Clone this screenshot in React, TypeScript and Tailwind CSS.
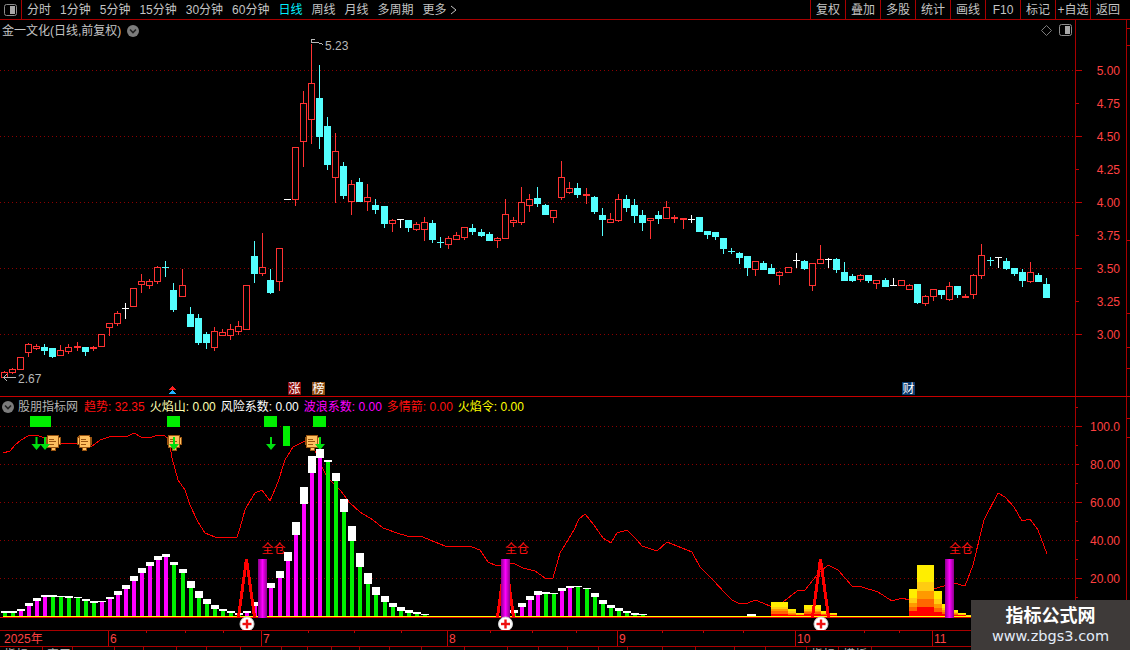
import React from 'react'

type Row = [string, number, number, number, number]

const RED = '#ff3232'
const CYAN = '#54ffff'
const LINE = 'border-[#a80000]'
const DOT = '#8c0000'

// candles, values are read off a 3x crop so each group has its own base y
const group1: Row[] = [
  ['r',420,427,443,445],['r',412,418,428,430],['r',382,382,419,419],['r',338,343,368,380],['r',340,348,354,358],
  ['c',339,351,360,374],['c',354,354,378,381],['r',342,361,377,377],['r',339,352,365,371],['r',333,348,353,360],
  ['c',351,351,363,377],['r',345,351,355,362],['r',310,313,350,350],['r',276,280,293,315],['r',240,250,281,285],
  ['w',216,236,236,264],['r',175,175,230,230],['r',129,154,163,186],['r',145,154,166,176],['r',106,112,155,161],
  ['x',90,111,111,138],['c',156,181,237,243],['r',114,166,200,200],['c',228,252,288,288],['c',249,264,336,342],
  ['c',303,312,336,354],['r',288,304,353,362],['r',294,307,317,317],['r',279,298,317,327],['r',270,289,305,312],
  ['r',166,166,299,299],['c',30,78,129,156],['r',6,112,131,137],['c',114,150,186,189],['r',55,55,155,180],
]
const group2: Row[] = [
  ['w',508,508,508,508],['r',352,352,508,525],['r',180,220,334,408],['r',40,160,268,339],['c',102,204,318,354],
  ['c',258,288,402,417],['r',306,364,443,516],['c',393,408,495,504],['r',447,463,515,552],['c',441,456,513,513],
  ['r',459,502,515,540],['c',504,525,537,549],['c',528,528,579,591],['r',564,570,581,603],['w',565,567,567,591],
  ['c',567,570,591,603],['r',573,583,597,600],['r',558,577,597,630],['c',567,579,627,636],['x',618,636,636,651],
  ['r',615,624,644,654],['r',603,616,629,629],['r',592,592,621,627],['c',579,594,603,612],['c',594,606,615,618],
  ['c',603,612,630,630],['r',618,624,632,651],['r',504,553,626,626],['r',558,570,578,588],['r',468,517,578,582],
  ['r',489,508,527,543],['c',468,504,519,528],['c',519,525,552,552],['r',541,541,563,576],['r',390,442,503,507],
]
const group3: Row[] = [
  ['r',93,115,128,131],['c',96,114,132,141],['r',111,132,137,159],['c',135,141,183,189],['c',171,195,207,255],
  ['r',186,208,218,218],['r',129,148,212,215],['c',132,147,171,183],['c',144,165,195,216],['c',177,195,216,240],
  ['r',204,205,212,264],['c',180,195,204,219],['r',150,172,206,206],['r',192,202,206,216],['r',204,204,209,234],
  ['w',192,207,207,216],['c',201,201,243,243],['c',240,243,252,264],['c',246,246,258,267],['c',264,264,294,309],
  ['x',291,303,303,309],['c',303,309,321,339],['c',318,318,351,375],['r',334,334,357,375],['c',330,339,357,357],
  ['c',339,354,369,369],['r',360,367,377,402],['r',348,352,368,368],['w',306,330,330,351],['c',327,333,354,357],
  ['r',340,340,405,420],['r',282,328,341,341],['w',321,327,327,351],
]
const group4: Row[] = [
  ['c',81,87,117,126],['c',93,126,150,150],['c',129,138,150,153],['r',129,136,147,153],['c',135,135,150,156],
  ['r',147,151,159,174],['c',141,150,168,168],['w',141,165,165,165],['r',147,151,167,167],['r',159,166,179,179],
  ['c',162,162,216,219],['r',192,199,219,225],['r',178,178,200,210],['c',177,180,192,204],['r',153,169,207,210],
  ['c',165,168,192,201],['r',189,199,203,203],['r',129,136,194,204],['r',39,76,137,144],['x',78,90,90,105],
  ['w',78,81,81,111],['c',81,93,114,117],['c',114,114,129,135],['c',114,126,150,168],['r',93,127,153,156],
  ['c',126,135,153,153],['c',141,162,201,201],
]

const rebase = (rows: Row[], base: number): Row[] =>
  rows.map(([t, a, b, c, d]) => [t, base + a / 3, base + b / 3, base + c / 3, base + d / 3])
const candles = [...rebase(group1, 230), ...rebase(group2, 30), ...rebase(group3, 150), ...rebase(group4, 230)]

const cx = (i: number) => Math.floor(4.3 + 8.08 * i) + 0.5
const snap = (v: number) => Math.floor(v) + 0.5

// index, colour, top of white cap, bottom of white cap
type Bar = [number, string, number, number]
const barsA: Bar[] = [
  [0,'g',243,248],[1,'g',243,248],[2,'m',237,243],[3,'m',219,228],[4,'m',204,213],[5,'m',195,201],[6,'g',195,201],
  [7,'g',198,201],[8,'g',198,204],[9,'g',201,204],[10,'g',207,213],[11,'g',213,219],[12,'m',213,216],[13,'m',201,207],
  [14,'m',183,195],[15,'m',165,177],[16,'m',138,153],[17,'m',114,129],[18,'m',96,108],[19,'m',78,90],[20,'m',72,81],
  [21,'g',96,105],[22,'g',117,129],[23,'g',153,174],[24,'g',183,204],[25,'g',207,222],[26,'g',225,237],[27,'g',237,243],
  [28,'g',243,249],[29,'g',249,255],[30,'m',243,249],[31,'m',216,228],
  [63,'g',240,248],[64,'m',219,231],[65,'m',198,210],[66,'m',183,195],[67,'g',186,191],[68,'g',189,192],[69,'m',174,183],
  [70,'m',168,174],[71,'g',168,171],[72,'g',174,177],[73,'g',189,201],[74,'g',210,222],[75,'g',225,234],[76,'g',234,243],
  [77,'g',243,249],[78,'g',249,255],[79,'g',252,255],
]
const barsB: Bar[] = [
  [33,'m',429,444],[34,'m',393,414],[35,'m',336,363],[36,'m',246,285],[37,'m',141,192],[38,'m',48,99],[39,'m',27,54],
  [40,'g',60,66],[41,'g',99,123],[42,'g',177,216],[43,'g',258,303],[44,'g',339,381],[45,'g',399,432],[46,'g',441,465],
  [47,'g',468,486],[48,'g',489,501],[49,'g',501,513],[50,'g',510,519],[51,'g',516,522],[52,'g',522,525],
]
const bars: Bar[] = [
  ...barsA.map(([i, c, a, b]): Bar => [i, c, 530 + a / 3, 530 + b / 3]),
  ...barsB.map(([i, c, a, b]): Bar => [i, c, 440 + a / 3, 440 + b / 3]),
]

const flames = [
  [771,788,216],[788,796,237],[796,804,249],[804,821,225],[821,829,243],[829,837,249],
  [909,917,177],[917,934,105],[934,942,183],[942,954,222],[954,958,240],[958,966,249],[966,971,255],
]
const flameColors = ['#ffee00', '#ffcc11', '#ff9900', '#ff6600', '#ff0000']
const flameStops = [0, 1 / 3, 0.5, 0.66, 0.83, 1]

const trend =
  '3,453 10,451 15,445 21,440 28,436 36,435 45,438 52,442 59,444 78,443 91,447 100,440 109,437 119,436 126,437 ' +
  '134,433 141,437 150,438 157,435 165,436 169,440 172,458 178,480 185,490 190,505 198,522 205,533 215,537 ' +
  '230,538 237,537 240,528 245,510 250,501 255,493 262,490 270,501 278,482 285,460 293,447 303,442 311,441 ' +
  '320,463 327,477 340,490 350,503 360,512 373,520 383,528 397,533 407,536 423,537 430,540 445,546 472,547 ' +
  '480,550 488,562 497,566 513,563 523,568 535,571 545,578 553,578 560,553 568,540 574,530 579,519 585,514 ' +
  '594,525 603,538 611,543 617,533 627,530 637,540 642,546 657,551 667,542 677,546 692,552 700,567 713,580 ' +
  '725,593 732,600 738,603 748,603 755,600 763,603 772,607 783,602 797,591 805,590 817,575 828,565 838,570 ' +
  '852,586 862,587 878,592 892,601 902,598 909,600 930,590 954,583 965,586 973,565 984,520 998,493 1005,497 ' +
  '1014,507 1022,521 1030,519 1038,530 1047,554'

const signX = [53, 84.5, 174, 312]
const arrowX = [36.5, 45, 174, 271, 320]
const priceLabels: [string, number][] = [
  ['5.00', 70], ['4.75', 103], ['4.50', 136], ['4.25', 169], ['4.00', 202],
  ['3.75', 235], ['3.50', 268], ['3.25', 301], ['3.00', 334],
]
const indicatorLabels: [string, number][] = [['100.0', 426], ['80.00', 464], ['60.00', 502], ['40.00', 540], ['20.00', 578]]
const tabs: [string, string][] = [
  ['指标A','w-[43px]'],['窗口','w-[30px]'],['MACD','w-[42px]'],['DMI','w-[29px]'],['DMA','w-[33px]'],['FSL','w-[30px]'],
  ['TRIX','w-[34px]'],['BRAR','w-[41px]'],['CR','w-[26px]'],['VR','w-[24px]'],['OBV','w-[28px]'],['ASI','w-[30px]'],
  ['EMV','w-[32px]'],['VOL','w-[43px]'],['RSI','w-[43px]'],['WR','w-[31px]'],['SAR','w-[29px]'],['KDJ','w-[31px]'],
  ['CCI','w-[29px]'],['ROC','w-[35px]'],['MTM','w-[33px]'],['BOLL','w-[39px]'],['PSY','w-[31px]'],['MCST','w-[41px]'],
  ['指标','w-[32px]'],['模板','w-[33px]'],
]

const ChevronIcon = () => (
  <svg width="12" height="12" viewBox="0 0 12 12" className="shrink-0">
    <circle cx="6" cy="6" r="6" fill="#7c7c7c" />
    <polyline points="3,4.5 6,7.5 9,4.5" fill="none" stroke="#222" strokeWidth="1.6" />
  </svg>
)

const SplitIcon = () => (
  <svg width="13" height="12" viewBox="0 0 13 12" className="shrink-0">
    <rect x="0.5" y="0.5" width="12" height="11" rx="2" fill="none" stroke="#8c8c8c" />
    <rect x="6" y="2" width="5" height="8" fill="#a8a8a8" />
  </svg>
)

const Candle = ({ row, i }: { row: Row; i: number }) => {
  const [t, h, a, b, l] = row
  const x = cx(i)
  if (t === 'w' || t === 'x') {
    const color = t === 'w' ? '#ffffff' : CYAN
    return (
      <g stroke={color}>
        <line x1={x} x2={x} y1={snap(h)} y2={snap(l)} />
        <line x1={x - 3.5} x2={x + 3.5} y1={snap(a)} y2={snap(a)} />
      </g>
    )
  }
  const color = t === 'r' ? RED : CYAN
  return (
    <g stroke={color}>
      <line x1={x} x2={x} y1={snap(h)} y2={snap(l)} />
      <rect
        x={x - 3}
        y={snap(a)}
        width={6}
        height={Math.max(snap(b) - snap(a), 1)}
        fill={t === 'r' ? '#000' : CYAN}
      />
    </g>
  )
}

const Mark = ({ x, label, color }: { x: number; label: string; color: string }) => (
  <g>
    <rect x={x} y={382} width={13} height={13} fill={color} />
    <text x={x + 6.5} y={393} fontSize="12" fill="#fff" textAnchor="middle">{label}</text>
  </g>
)

const PriceChart = () => (
  <svg width="1075" height="376" viewBox="0 20 1075 376" className="block" shapeRendering="crispEdges">
    {[70, 136, 202, 268, 334].map((y) => (
      <line key={y} x1="0" x2="1075" y1={y + 0.5} y2={y + 0.5} stroke={DOT} strokeDasharray="1 3" />
    ))}
    {candles.map((row, i) => <Candle key={i} row={row} i={i} />)}
    <g fill="none" stroke="#b8b8b8">
      <polyline points="311.5,43 311.5,39.5 315,39.5" />
      <polyline points="311.5,42.5 315,42.5 318,42.5 323,44.5" />
    </g>
    <text x="325" y="50" fontSize="12" fill="#b8b8b8">5.23</text>
    <g fill="none" stroke="#b8b8b8">
      <polyline points="7,374 3.5,377.5 7,381" />
      <line x1="3" x2="16" y1="377.5" y2="377.5" />
    </g>
    <text x="18" y="383" fontSize="12" fill="#b8b8b8">2.67</text>
    <polygon points="172.5,386 176,390 169,390" fill="#ff2020" />
    <polygon points="172.5,390 176,394 169,394" fill="#20b0ff" />
    <Mark x={288} label="涨" color="#8c0a0a" />
    <Mark x={312} label="榜" color="#8a4a10" />
    <Mark x={902} label="财" color="#0a3a6e" />
  </svg>
)

const Mountain = ({ x }: { x: number }) => (
  <polyline points={`${x - 8},617 ${x},559 ${x + 8},617`} fill="none" stroke="#ff0000" strokeWidth="3" />
)

const PlusBadge = ({ x }: { x: number }) => (
  <g shapeRendering="auto">
    <circle cx={x} cy="624" r="7" fill="#fff" stroke="#cfcfcf" />
    <line x1={x - 4.5} x2={x + 4.5} y1="624" y2="624" stroke="#ee1111" strokeWidth="2.4" />
    <line x1={x} x2={x} y1="619.5" y2="628.5" stroke="#ee1111" strokeWidth="2.4" />
  </g>
)

const Sign = ({ x }: { x: number }) => (
  <g fill="#ffc060" stroke="#9a5410">
    <rect x={x - 7} y="437.5" width="2" height="7" />
    <rect x={x + 5} y="437.5" width="2" height="7" />
    <rect x={x - 5.5} y="435.5" width="11" height="12" rx="1" />
    <rect x={x - 2} y="447.5" width="4" height="3" />
    <line x1={x - 4} x2={x + 1} y1="439.5" y2="439.5" />
    <line x1={x - 4} x2={x + 3} y1="441.5" y2="441.5" />
    <line x1={x - 4} x2={x + 1} y1="444.5" y2="444.5" />
  </g>
)

const IndicatorChart = () => (
  <svg width="1075" height="233" viewBox="0 397 1075 233" className="block" shapeRendering="crispEdges">
    <defs>
      <linearGradient id="purple" x1="0" x2="1" y1="0" y2="0">
        <stop offset="0" stopColor="#8a008a" />
        <stop offset="0.5" stopColor="#ff00ff" />
        <stop offset="1" stopColor="#8a008a" />
      </linearGradient>
    </defs>
    {[426, 464, 502, 540, 578].map((y) => (
      <line key={y} x1="0" x2="1075" y1={y + 0.5} y2={y + 0.5} stroke={DOT} strokeDasharray="1 3" />
    ))}
    <polyline points={trend} fill="none" stroke="#ff0000" />
    <g fill="#00f000">
      <rect x="30" y="416" width="21" height="11" />
      <rect x="167" y="416" width="13" height="11" />
      <rect x="264" y="416" width="13" height="11" />
      <rect x="313" y="416" width="13" height="11" />
      <rect x="283" y="426" width="7" height="20" />
    </g>
    {signX.map((x) => <Sign key={x} x={x} />)}
    {arrowX.map((x) => (
      <polygon
        key={x}
        points={`${x - 1},437 ${x + 1},437 ${x + 1},444 ${x + 5},444 ${x},450 ${x - 5},444 ${x - 1},444`}
        fill="#00e010"
        shapeRendering="auto"
      />
    ))}
    {bars.map(([i, c, a, b]) => {
      const x = Math.floor(cx(i))
      return (
        <g key={i}>
          <rect x={x - 1} y={b} width="4" height={Math.max(616 - b, 0)} fill={c === 'm' ? '#ff00ff' : '#00f000'} />
          <rect x={x - 3} y={a} width="8" height={b - a} fill="#fff" />
        </g>
      )
    })}
    <rect x="747" y="614" width="9" height="2" fill="#fff" />
    {flames.map(([x0, x1, top]) => {
      const y0 = 530 + top / 3
      const h = 616 - y0
      return flameColors.map((color, k) => (
        <rect
          key={`${x0}-${k}`}
          x={x0}
          width={x1 - x0}
          y={y0 + h * flameStops[k]}
          height={h * (flameStops[k + 1] - flameStops[k])}
          fill={color}
        />
      ))
    })}
    <rect x="3" y="616" width="1072" height="1" fill="#ffff00" />
    <rect x="0" y="617" width="1075" height="1" fill="#e00000" />
    {[246.5, 505.5, 820.5].map((x) => <Mountain key={x} x={x} />)}
    {[258, 501, 945].map((x) => (
      <rect key={x} x={x} y="559" width="9" height="58.5" fill="url(#purple)" />
    ))}
    {[261.5, 505, 949].map((x) => (
      <text key={x} x={x} y="553" fontSize="12" fill="#ff1010" shapeRendering="auto">全仓</text>
    ))}
    {[247, 505.5, 821].map((x) => <PlusBadge key={x} x={x} />)}
  </svg>
)

const AxisColumn = ({
  labels,
  minor,
  y0,
  h,
}: {
  labels: [string, number][]
  minor: number[]
  y0: number
  h: number
}) => (
  <svg width="50" height={h} viewBox={`1076 ${y0} 50 ${h}`} className="block" shapeRendering="crispEdges">
    {labels.map(([t, y], k) => (
      <g key={t}>
        <line
          x1="1076"
          x2={k % 2 === 0 ? 1082 : 1079}
          y1={y + 0.5}
          y2={y + 0.5}
          stroke="#c00000"
        />
        <text x="1120" y={y + 5} fontSize="12" fill="#ff4040" textAnchor="end" shapeRendering="auto">{t}</text>
      </g>
    ))}
    {minor.map((y) => <line key={y} x1="1076" x2="1078" y1={y + 0.5} y2={y + 0.5} stroke="#c00000" />)}
  </svg>
)

const SideTicks = ({ ys, y0, h }: { ys: number[]; y0: number; h: number }) => (
  <svg width="3" height={h} viewBox={`0 ${y0} 3 ${h}`} className="block" shapeRendering="crispEdges">
    {ys.map((y) => <line key={y} x1="0" x2="3" y1={y + 0.5} y2={y + 0.5} stroke="#c00000" />)}
  </svg>
)

const DateAxis = () => (
  <svg width="1130" height="15" viewBox="0 631 1130 15" className="block" shapeRendering="crispEdges">
    {[108, 261, 447, 617, 795, 932].map((x) => (
      <line key={x} x1={x + 0.5} x2={x + 0.5} y1="631" y2="646" stroke="#c00000" />
    ))}
    {[146, 185, 223, 308, 354, 401, 490, 532, 576, 662, 703, 743, 864, 899].map((x) => (
      <line key={x} x1={x + 0.5} x2={x + 0.5} y1="631" y2="633" stroke="#c00000" />
    ))}
    <g fontSize="12" fill="#ff4040" shapeRendering="auto">
      <text x="4" y="643">2025年</text>
      <text x="110" y="643">6</text>
      <text x="263" y="643">7</text>
      <text x="449" y="643">8</text>
      <text x="619" y="643">9</text>
      <text x="797" y="643">10</text>
      <text x="934" y="643">11</text>
    </g>
  </svg>
)

export default function App() {
  const periods = ['分时', '1分钟', '5分钟', '15分钟', '30分钟', '60分钟']
  const periods2 = ['周线', '月线', '多周期']
  const actions = ['复权', '叠加', '多股', '统计', '画线', 'F10', '标记', '+自选', '返回']

  return (
    <div className="relative w-[1130px] h-[650px] overflow-hidden bg-black text-[12px] text-[#c4c4c4] font-['Liberation_Sans','Noto_Sans_CJK_SC',sans-serif]">
      <div className={`flex h-[20px] items-center border-b ${LINE}`}>
        <div className={`flex h-full w-[22px] shrink-0 items-center justify-center border-r ${LINE}`}>
          <SplitIcon />
        </div>
        <div className="flex flex-1 items-center gap-[9px] pl-[5px] whitespace-nowrap">
          {periods.map((p) => <span key={p}>{p}</span>)}
          <span className="text-[#00f0ff]">日线</span>
          {periods2.map((p) => <span key={p}>{p}</span>)}
          <span className="flex items-center gap-[3px]">
            更多
            <svg width="7" height="10" viewBox="0 0 7 10">
              <polyline points="1,1 6,5 1,9" fill="none" stroke="#c4c4c4" />
            </svg>
          </span>
        </div>
        <div className="flex h-full items-center pr-[5px]">
          {actions.map((a) => (
            <span key={a} className={`flex h-full w-[35px] items-center justify-center border-l ${LINE} whitespace-nowrap`}>
              {a}
            </span>
          ))}
        </div>
      </div>

      <div className={`flex h-[377px] border-b border-[#c80000]`}>
        <div className="relative w-[1075px] shrink-0">
          <PriceChart />
          <div className="absolute left-[2px] top-[2px] flex items-center gap-[6px] whitespace-nowrap">
            <span>金一文化(日线,前复权)</span>
            <ChevronIcon />
          </div>
          <div className="absolute right-[3px] top-[4px] flex items-center gap-[7px]">
            <svg width="11" height="11" viewBox="0 0 11 11">
              <polygon points="5.5,0.5 10.5,5.5 5.5,10.5 0.5,5.5" fill="none" stroke="#7c7c7c" />
            </svg>
            <SplitIcon />
          </div>
        </div>
        <div className={`w-[51px] shrink-0 border-l ${LINE}`}>
          <AxisColumn labels={priceLabels} minor={[]} y0={20} h={376} />
        </div>
        <div className={`w-[4px] shrink-0 border-l ${LINE}`}>
          <SideTicks ys={[28, 45, 240, 313, 347, 368]} y0={20} h={376} />
        </div>
      </div>

      <div className={`flex h-[234px] border-b ${LINE}`}>
        <div className="relative w-[1075px] shrink-0">
          <IndicatorChart />
          <div className="absolute left-[2px] top-[1px] flex items-center whitespace-nowrap">
            <ChevronIcon />
            <span className="ml-[4px] text-[#b4b4b4]">股朋指标网</span>
            <span className="ml-[6px] text-[#ff1010]">趋势: 32.35</span>
            <span className="ml-[5px] text-[#ffffb0]">火焰山: 0.00</span>
            <span className="ml-[5px] text-white">风险系数: 0.00</span>
            <span className="ml-[5px] text-[#ff00ff]">波浪系数: 0.00</span>
            <span className="ml-[5px] text-[#ff1010]">多情箭: 0.00</span>
            <span className="ml-[5px] text-[#ffff00]">火焰令: 0.00</span>
          </div>
        </div>
        <div className={`w-[51px] shrink-0 border-l ${LINE}`}>
          <AxisColumn labels={indicatorLabels} minor={[407, 445, 483, 521, 559, 597]} y0={397} h={233} />
        </div>
        <div className={`w-[4px] shrink-0 border-l ${LINE}`}>
          <SideTicks ys={[418, 437]} y0={397} h={233} />
        </div>
      </div>

      <div className={`h-[16px] border-b ${LINE}`}>
        <DateAxis />
      </div>

      <div className="flex h-[3px] overflow-hidden">
        {tabs.map(([t, w]) => (
          <span key={t} className={`${w} shrink-0 border-r ${LINE} pl-[4px] pt-[2px] leading-[12px] text-[#b4b4b4] whitespace-nowrap overflow-hidden`}>
            {t}
          </span>
        ))}
      </div>

      <div className="absolute bottom-0 right-0 flex h-[50px] w-[159px] flex-col items-center justify-center bg-[#3e3a39]">
        <span className="text-[18px] leading-[22px] font-bold text-white">指标公式网</span>
        <span className="text-[14.5px] leading-[18px] text-[#e4ecf8] font-['DejaVu_Sans',sans-serif]">www.zbgs3.com</span>
      </div>
    </div>
  )
}
